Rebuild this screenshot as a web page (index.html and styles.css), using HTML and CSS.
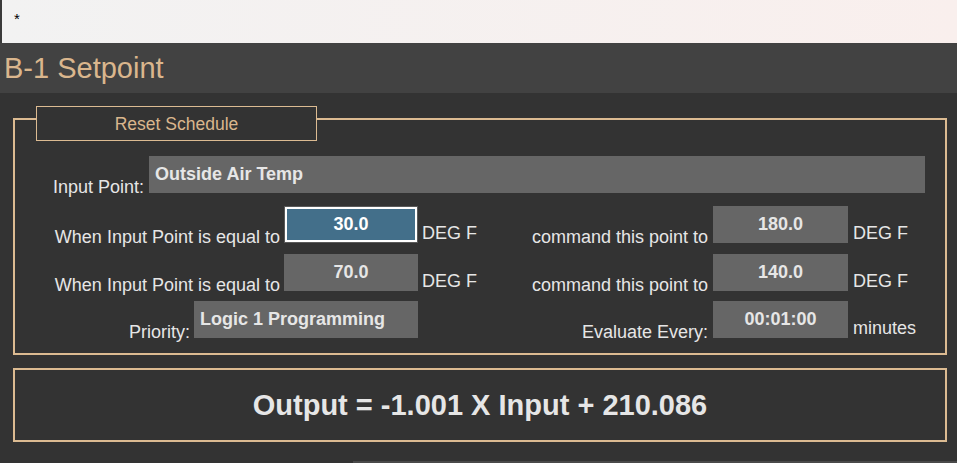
FILE: index.html
```html
<!DOCTYPE html>
<html>
<head>
  <title>B-1 Setpoint</title>
  <link rel="stylesheet" href="styles.css">
</head>
<body>
  <div class="topbar"><span class="mark">*</span></div>

  <div class="header">
    <h1 class="title">B-1 Setpoint</h1>
  </div>

  <div class="content">
    <div class="group">
      <div class="group-title">Reset Schedule</div>

      <div class="row-input">
        <span class="label">Input Point:</span>
        <div class="field field-text field-wide">Outside Air Temp</div>
      </div>

      <div class="schedule">
        <div class="cell cell-left">
          <span class="label">When Input Point is equal to</span>
          <div class="field field-num field-active">30.0</div>
        </div>
        <div class="cell unit">DEG F</div>
        <div class="cell cell-right">
          <span class="label">command this point to</span>
          <div class="field field-num field-cmd">180.0</div>
        </div>
        <div class="cell unit unit-right">DEG F</div>

        <div class="cell cell-left">
          <span class="label">When Input Point is equal to</span>
          <div class="field field-num">70.0</div>
        </div>
        <div class="cell unit">DEG F</div>
        <div class="cell cell-right">
          <span class="label">command this point to</span>
          <div class="field field-num field-cmd">140.0</div>
        </div>
        <div class="cell unit unit-right">DEG F</div>

        <div class="cell cell-left">
          <span class="label">Priority:</span>
          <div class="field field-text field-priority">Logic 1 Programming</div>
        </div>
        <div class="cell unit"></div>
        <div class="cell cell-right">
          <span class="label">Evaluate Every:</span>
          <div class="field field-num field-cmd">00:01:00</div>
        </div>
        <div class="cell unit unit-right">minutes</div>
      </div>
    </div>

    <div class="output">Output = -1.001 X Input + 210.086</div>
  </div>

  <div class="statusbar"><div class="statusbar-fill"></div></div>
</body>
</html>
```

FILE: styles.css
```css
body {
  margin: 0;
  background-color: #333333;
  font-family: "Liberation Sans", Arial, sans-serif;
  color: #e6e6e6;
}
.topbar {
  height: 43px;
  box-sizing: border-box;
  padding: 10px 0 0 12px;
  border-left: 2px solid #3a3a3a;
  background: linear-gradient(to right, #f2f2f2, #f9efed);
}
.mark {
  font-size: 15px;
  line-height: 16px;
  color: #000;
}
.header {
  height: 50px;
  box-sizing: border-box;
  padding: 9px 0 0 4px;
  background-color: #424242;
}
.title {
  margin: 0;
  font-size: 29px;
  font-weight: normal;
  line-height: 32px;
  color: #dab68d;
}
.content {
  padding: 25px 10px 19px 13px;
}
.group {
  position: relative;
  border: 2px solid #dcbb92;
  padding: 36px 20px 11px 0;
}
.group-title {
  position: absolute;
  top: -14px;
  left: 21px;
  width: 279px;
  height: 33px;
  border: 1px solid #dcbb92;
  background-color: #333333;
  font-size: 17.5px;
  line-height: 34px;
  text-align: center;
  color: #dab68d;
}
.label {
  font-size: 18px;
  line-height: 20px;
  white-space: nowrap;
}
.field {
  height: 37px;
  box-sizing: border-box;
  margin-bottom: 4px;
  background-color: #666666;
  font-size: 18px;
  font-weight: bold;
  line-height: 37px;
  color: #e6e6e6;
  white-space: nowrap;
}
.field-text {
  padding-left: 6px;
}
.field-num {
  width: 134px;
  text-align: center;
}
.field-cmd {
  width: 135px;
}
.field-active {
  height: 35px;
  width: 132px;
  margin: 1px 1px 5px 1px;
  border: 2px solid #ffffff;
  outline: 1px solid #5a5a5a;
  background-color: #436f8a;
  line-height: 31px;
  color: #ffffff;
}
.field-priority {
  width: 224px;
}
.row-input {
  display: flex;
  align-items: flex-end;
  gap: 5px;
  padding-left: 38px;
  margin-bottom: 9px;
}
.field-wide {
  flex: 1;
}
.schedule {
  display: grid;
  grid-template-columns: 403px 60px 370px auto;
  row-gap: 6.5px;
}
.cell {
  display: flex;
  align-items: flex-end;
}
.cell-left,
.cell-right {
  justify-content: flex-end;
  gap: 4px;
}
.cell-right {
  gap: 5px;
}
.unit {
  padding-left: 4px;
  font-size: 18px;
  line-height: 20px;
  margin-bottom: 4px;
  white-space: nowrap;
}
.unit-right {
  padding-left: 5px;
}
.output {
  margin-top: 13px;
  height: 74px;
  box-sizing: border-box;
  border: 2px solid #dcbb92;
  font-size: 29px;
  font-weight: bold;
  line-height: 70px;
  text-align: center;
  color: #e6e6e6;
}
.statusbar {
  height: 2px;
  padding-left: 353px;
}
.statusbar-fill {
  height: 2px;
  background-color: #4a4a4a;
}
```
